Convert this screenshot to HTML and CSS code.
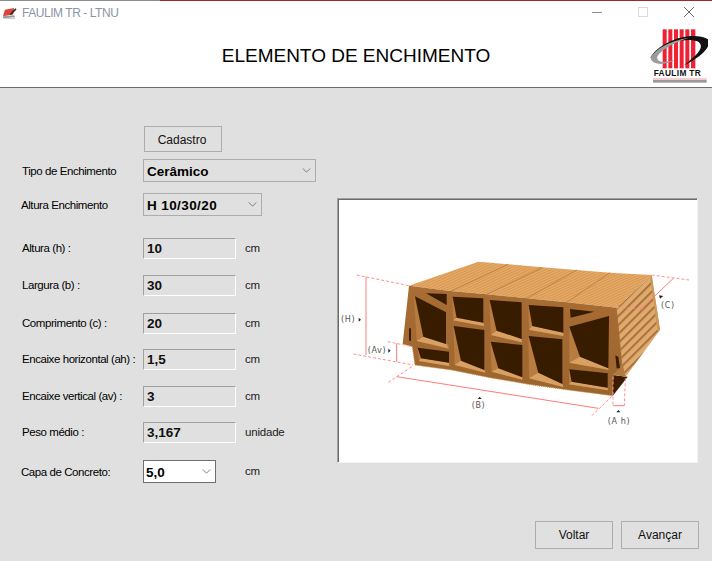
FILE: index.html
```html
<!DOCTYPE html>
<html lang="pt">
<head>
<meta charset="utf-8">
<title>FAULIM TR - LTNU</title>
<link rel="stylesheet" href="styles.css">
</head>
<body>
<div class="window">
  <header class="header">
    <div class="accent"><span class="accent-gray"></span><span class="accent-red"></span></div>
    <div class="titlebar">
      <svg class="app-icon" viewBox="0 0 16 14" aria-hidden="true">
        <path d="M1 10 L3 3 L13 1 L12 8 Z" fill="#d9453c"/>
        <path d="M9 8 L15 2" stroke="#222" stroke-width="1.6"/>
        <path d="M1 10 L13 9 L14 11 L1 12 Z" fill="#9a9a9a"/>
        <path d="M2 12.5 H14" stroke="#c8c8c8" stroke-width="1"/>
      </svg>
      <span class="app-name">FAULIM TR - LTNU</span>
      <div class="controls">
        <svg class="control" viewBox="0 0 46 12" aria-hidden="true"><path d="M18 6.5 H28" stroke="#8a8a8a" fill="none"/></svg>
        <svg class="control" viewBox="0 0 46 12" aria-hidden="true"><rect x="18.5" y="1.5" width="9" height="9" stroke="#dcdcdc" fill="none"/></svg>
        <svg class="control" viewBox="0 0 46 12" aria-hidden="true"><path d="M18 1 L28 11 M28 1 L18 11" stroke="#6a6a6a" fill="none"/></svg>
      </div>
    </div>
    <div class="banner">
      <h1 class="heading">ELEMENTO DE ENCHIMENTO</h1>
      <svg class="logo" viewBox="264 78 180 174" role="img" aria-label="Faulim TR">
        <g fill="#ee2232">
          <rect x="308" y="88" width="12" height="117"/>
          <rect x="325" y="88" width="12" height="117"/>
          <rect x="342" y="88" width="12" height="117"/>
          <rect x="359" y="88" width="12" height="117"/>
          <rect x="376" y="88" width="12" height="117"/>
          <rect x="393" y="88" width="13" height="117"/>
        </g>
        <path d="M270 175 C296 124 396 90 444 118 C458 140 420 172 372 196 C408 168 440 140 412 124 C362 108 298 140 270 175 Z" fill="#111"/>
        <path d="M272 174 C288 142 340 120 388 113 C332 130 288 160 292 176 C296 190 330 186 348 178 C316 198 276 196 272 174 Z" fill="#9c9c9c"/>
        <text class="logo-text" x="281" y="228">FAULIM TR</text>
        <rect x="279" y="235" width="161" height="4" fill="#f0b4b8"/>
        <rect x="279" y="240" width="161" height="8" fill="#9a9a9a"/>
      </svg>
    </div>
  </header>

  <main class="content">
    <div class="columns">
      <form class="form">
        <span class="spacer"></span>
        <button type="button" class="btn btn-cadastro">Cadastro</button>

        <label class="label label-select">Tipo de Enchimento</label>
        <div class="select select-wide"><span class="select-value">Cerâmico</span><svg class="chevron" viewBox="0 0 10 6" aria-hidden="true"><path d="M0.5 0.5 L5 5 L9.5 0.5" /></svg></div>

        <label class="label label-select label-tight">Altura Enchimento</label>
        <div class="select select-mid"><span class="select-value">H 10/30/20</span><svg class="chevron" viewBox="0 0 10 6" aria-hidden="true"><path d="M0.5 0.5 L5 5 L9.5 0.5" /></svg></div>

        <label class="label">Altura (h) :</label><div class="field">10</div><span class="unit">cm</span>
        <label class="label">Largura (b) :</label><div class="field">30</div><span class="unit">cm</span>
        <label class="label">Comprimento (c) :</label><div class="field">20</div><span class="unit">cm</span>
        <label class="label">Encaixe horizontal (ah) :</label><div class="field">1,5</div><span class="unit">cm</span>
        <label class="label">Encaixe vertical (av) :</label><div class="field">3</div><span class="unit">cm</span>
        <label class="label">Peso médio :</label><div class="field">3,167</div><span class="unit">unidade</span>

        <label class="label label-select label-tight">Capa de Concreto:</label>
        <div class="select select-small"><span class="select-value">5,0</span><svg class="chevron" viewBox="0 0 10 6" aria-hidden="true"><path d="M0.5 0.5 L5 5 L9.5 0.5" /></svg></div>
        <span class="unit unit-select">cm</span>
      </form>

      <figure class="picture">
        <svg class="diagram" viewBox="12 15 1071 783" role="img" aria-label="Bloco cerâmico com cotas">
          <defs>
            <pattern id="ridges" width="7" height="7" patternUnits="userSpaceOnUse" patternTransform="rotate(-25)">
              <rect width="7" height="7" fill="#e6a965"/>
              <rect width="7" height="2.4" fill="#d49552"/>
            </pattern>
            <pattern id="sideRidges" width="19" height="19" patternUnits="userSpaceOnUse" patternTransform="rotate(-45)">
              <rect width="19" height="19" fill="#deaa70"/>
              <rect width="19" height="6" fill="#a87238"/>
            </pattern>
            <linearGradient id="frontFace" x1="0" y1="0" x2="0" y2="1">
              <stop offset="0" stop-color="#a96d34"/>
              <stop offset="1" stop-color="#9c652d"/>
            </linearGradient>
            <filter id="soft" x="-5%" y="-5%" width="110%" height="110%"><feGaussianBlur stdDeviation="1"/></filter>
          </defs>

          <g filter="url(#soft)">
            <path d="M835 540 L878 545 L833 603 Z" fill="#3a1d05"/>
            <path d="M845 338 L950 240 L975 405 L872 545 L838 540 Z" fill="url(#sideRidges)"/>
            <path d="M950 240 L975 405 L968 412 L945 245 Z" fill="#cf9759"/>
            <path d="M845 338 L862 505 L872 545 L838 540 Z" fill="#b27a40"/>
            <path d="M222 272 L430 200 L520 208 L622 217 L725 225 L825 233 L950 240 L845 338 L695 322 L575 310 L455 298 L345 288 Z" fill="url(#ridges)"/>
            <g stroke="#c08343" stroke-width="3" fill="none">
              <path d="M345 290 L520 208"/>
              <path d="M455 298 L622 218"/>
              <path d="M575 310 L725 225"/>
              <path d="M695 322 L825 233"/>
            </g>
            <path d="M222 272 L345 288 L455 298 L575 310 L695 322 L845 338 L860 510 L835 540 L833 602 L700 585 L580 568 L465 548 L350 525 L240 510 L232 455 L203 447 Z" fill="url(#frontFace)"/>
            <path d="M232 456 L240 510 L350 525 L465 548 L580 568 L700 585 L833 602" stroke="#c78a4a" stroke-width="3" stroke-dasharray="3 3" fill="none"/>

            <!-- side walls of the hollows -->
            <g fill="#b87c41">
              <path d="M237 300 L265 425 L340 448 L342 462 L245 438 Z"/>
              <path d="M247 457 L258 490 L342 503 L343 513 L252 498 Z"/>
              <path d="M352 304 L365 368 L445 383 L447 393 L354 376 Z"/>
              <path d="M355 392 L378 497 L448 525 L452 533 L359 510 Z"/>
              <path d="M462 314 L485 407 L560 432 L560 442 L468 420 Z"/>
              <path d="M466 440 L490 520 L562 547 L562 554 L470 530 Z"/>
              <path d="M579 329 L592 393 L685 413 L685 423 L582 404 Z"/>
              <path d="M580 423 L610 533 L682 567 L685 576 L582 550 Z"/>
              <path d="M703 395 L735 485 L820 520 L820 524 L703 503 Z"/>
              <path d="M702 522 L710 560 L818 578 L818 586 L702 568 Z"/>
            </g>
            <!-- lit shelves -->
            <g fill="#d8a063">
              <path d="M265 425 L333 447 L340 460 L245 438 Z"/>
              <path d="M258 490 L342 503 L343 513 L252 498 Z"/>
              <path d="M365 368 L445 383 L447 393 L354 376 Z"/>
              <path d="M378 497 L448 525 L452 533 L359 510 Z"/>
              <path d="M485 407 L560 432 L560 442 L468 420 Z"/>
              <path d="M490 520 L562 547 L562 554 L470 530 Z"/>
              <path d="M592 393 L685 413 L685 423 L582 404 Z"/>
              <path d="M610 533 L682 567 L685 576 L582 550 Z"/>
              <path d="M735 485 L820 520 L820 524 L703 503 Z"/>
              <path d="M710 560 L818 578 L818 586 L702 568 Z"/>
            </g>
            <g fill="#381b04">
              <path d="M273 295 L335 297 L335 330 Z"/>
              <path d="M240 304 L333 352 L333 447 L265 425 Z"/>
              <path d="M248 458 L342 470 L342 503 L258 490 Z"/>
              <path d="M353 305 L445 310 L445 383 L365 368 Z"/>
              <path d="M356 393 L448 405 L448 525 L378 497 Z"/>
              <path d="M464 315 L560 322 L560 432 L485 407 Z"/>
              <path d="M467 440 L562 450 L562 547 L490 520 Z"/>
              <path d="M581 330 L685 337 L685 413 L592 393 Z"/>
              <path d="M581 423 L682 433 L682 567 L610 533 Z"/>
              <path d="M705 342 L778 350 L707 368 Z"/>
              <path d="M703 395 L822 363 L820 520 L735 485 Z"/>
              <path d="M703 523 L818 535 L818 578 L710 560 Z"/>
              <path d="M222 400 L228 400 L228 437 L222 437 Z"/>
              <path d="M841 481 L850 486 L855 520 L845 520 Z"/>
            </g>
          </g>

          <g class="dim-dash">
            <path d="M65 240 L222 272"/>
            <path d="M55 477 L235 510"/>
            <path d="M158 440 L232 455"/>
            <path d="M160 562 L235 512"/>
            <path d="M770 662 L833 602"/>
            <path d="M834 545 L834 632"/>
            <path d="M871 550 L868 632"/>
            <path d="M845 338 L925 342"/>
            <path d="M950 240 L1062 255"/>
          </g>
          <g class="dim-line">
            <path d="M93 245 L93 480"/>
            <path d="M185 445 L185 500"/>
            <path d="M185 545 L790 640"/>
            <path d="M834 632 L868 632"/>
            <path d="M1015 250 L915 345"/>
          </g>
          <g fill="#222">
            <path d="M71 368 L78 374 L71 380 Z"/>
            <path d="M160 461 L167 467 L160 473 Z"/>
            <path d="M428 612 L434 605 L440 612 Z"/>
            <path d="M844 652 L850 645 L856 652 Z"/>
            <path d="M972 301 L985 303 L975 311 Z"/>
          </g>
          <g class="dim-text">
            <text x="18" y="380">(H)</text>
            <text x="98" y="474">(Av)</text>
            <text x="410" y="638">(B)</text>
            <text x="978" y="338">(C)</text>
            <text x="818" y="686">(A h)</text>
          </g>
        </svg>
      </figure>
    </div>

    <div class="actions">
      <button type="button" class="btn btn-action">Voltar</button>
      <button type="button" class="btn btn-action">Avançar</button>
    </div>
  </main>
</div>
</body>
</html>
```

FILE: styles.css
```css
* { box-sizing: border-box; }

html, body {
  margin: 0;
  padding: 0;
}

body {
  width: 712px;
  height: 561px;
  overflow: hidden;
  font-family: "Liberation Sans", Arial, sans-serif;
  color: #111;
}

.window {
  display: flex;
  flex-direction: column;
  width: 712px;
  height: 561px;
  background: #e0e0e0;
}

/* Header */
.header {
  height: 88px;
  background: #fff;
  border-bottom: 1px solid #6d6d6d;
  display: flex;
  flex-direction: column;
}

.accent { display: flex; height: 1px; flex: none; }
.accent-gray { width: 160px; background: #8c8c8c; }
.accent-red { flex: 1; background: #9b2a2a; }

.titlebar {
  display: flex;
  align-items: center;
  height: 24px;
  flex: none;
  padding-left: 2px;
}

.app-icon { width: 15px; height: 13px; margin-right: 5px; }

.app-name {
  font-size: 12px;
  color: #8b94a6;
  letter-spacing: -0.45px;
}

.controls { margin-left: auto; display: flex; margin-top: -2px; }
.control { width: 46px; height: 12px; display: block; }

.banner {
  flex: 1;
  display: grid;
  grid-template-columns: 1fr auto 1fr;
  align-items: start;
  min-height: 0;
}

.heading {
  grid-column: 2;
  margin: 20px 0 0;
  font-size: 19px;
  font-weight: 400;
  line-height: 22px;
  color: #000;
  white-space: nowrap;
}

.logo {
  grid-column: 3;
  justify-self: end;
  width: 60px;
  height: 58px;
  margin: 1px 4px 0 0;
}

.logo-text {
  font-family: "Liberation Sans", Arial, sans-serif;
  font-weight: 700;
  font-size: 25px;
  fill: #111;
  letter-spacing: 1px;
}

/* Content */
.content {
  flex: 1;
  display: flex;
  flex-direction: column;
  min-height: 0;
}

.columns {
  display: flex;
  align-items: flex-start;
  flex: 1;
}

.form {
  display: grid;
  grid-template-columns: 121px 93px 9px 93px;
  grid-template-rows: 33px 34px 45px 37px 38px 36px 37px 36px 38px 23px;
  width: 337px;
  margin: 38px 0 0;
  padding-left: 22px;
  font-size: 12px;
}

.spacer { display: block; }

.btn {
  font-family: "Liberation Sans", Arial, sans-serif;
  font-size: 12px;
  color: #111;
  background: #e0e0e0;
  border: 1px solid #adadad;
  padding: 0;
}

.btn-cadastro {
  grid-column: 2 / span 3;
  justify-self: start;
  width: 78px;
  height: 26px;
  margin-left: 1px;
  padding: 1px 2px 0 0;
}

.label {
  grid-column: 1;
  align-self: start;
  line-height: 20px;
  font-size: 11.5px;
  color: #000;
  white-space: nowrap;
  letter-spacing: -0.43px;
}

.label-select { line-height: 25px; }
.label-tight { margin-left: -1px; }

.select {
  grid-column: 2 / span 3;
  justify-self: start;
  display: flex;
  align-items: center;
  height: 23px;
  padding: 0 4px 0 3px;
  background: #e0e0e0;
  border: 1px solid #adadad;
  font-size: 13.5px;
  font-weight: 700;
  color: #000;
}

.select-value { padding-top: 1px; }
.select .chevron { margin-left: auto; }

.select-wide { width: 173px; }
.select-mid { width: 119px; letter-spacing: 0.4px; }
.select-small {
  width: 73px;
  grid-column: 2;
  background: #fff;
  border-color: #6f6f6f;
  padding-left: 2px;
}

.chevron {
  width: 9px;
  height: 5px;
  flex: none;
}

.chevron path {
  fill: none;
  stroke: #666;
  stroke-width: 1;
}

.field {
  grid-column: 2;
  align-self: start;
  width: 93px;
  height: 21px;
  display: flex;
  align-items: center;
  padding: 0 0 1px 3px;
  background: #e0e0e0;
  border-style: solid;
  border-width: 1px;
  border-color: #a0a0a0 #fff #fff #a0a0a0;
  font-size: 13.5px;
  font-weight: 700;
  color: #111;
}

.unit {
  grid-column: 4;
  align-self: start;
  line-height: 20px;
  font-size: 11.5px;
  color: #222;
  letter-spacing: -0.2px;
}

.unit-select { line-height: 23px; }

/* Picture */
.picture {
  margin: 110px 0 0;
  width: 361px;
  height: 265px;
  padding: 1px;
  background: #fff;
  border-style: solid;
  border-width: 1px;
  border-color: #a0a0a0 #f4f4f4 #f4f4f4 #a0a0a0;
  box-shadow: inset 1px 1px 0 #696969;
}

.diagram { display: block; width: 357px; height: 261px; }

.dim-dash path {
  fill: none;
  stroke: #ff8f8f;
  stroke-width: 3;
  stroke-dasharray: 9 6;
}

.dim-line path {
  fill: none;
  stroke: #ff7b7b;
  stroke-width: 3;
}

.dim-text text {
  font-family: "DejaVu Sans", sans-serif;
  font-size: 24px;
  fill: #555;
  letter-spacing: 2px;
}

/* Actions */
.actions {
  display: flex;
  justify-content: flex-end;
  gap: 8px;
  padding: 0 13px 12px 0;
}

.btn-action { width: 78px; height: 28px; }
```
